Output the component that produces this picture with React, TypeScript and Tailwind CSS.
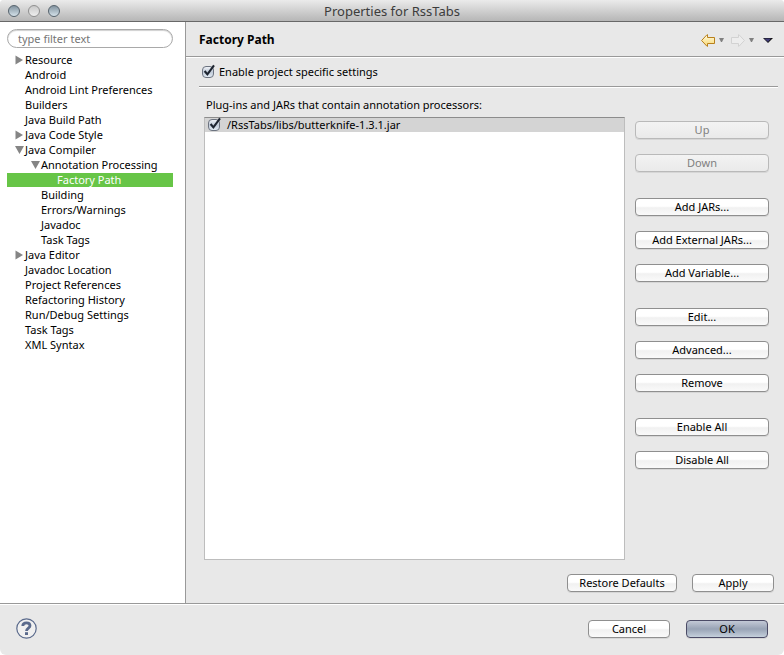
import { useId, useState } from "react";

type TreeItem = {
  label: string;
  depth: number;
  state?: "open" | "closed";
};

const treeItems: TreeItem[] = [
  { label: "Resource", depth: 0, state: "closed" },
  { label: "Android", depth: 0 },
  { label: "Android Lint Preferences", depth: 0 },
  { label: "Builders", depth: 0 },
  { label: "Java Build Path", depth: 0 },
  { label: "Java Code Style", depth: 0, state: "closed" },
  { label: "Java Compiler", depth: 0, state: "open" },
  { label: "Annotation Processing", depth: 1, state: "open" },
  { label: "Factory Path", depth: 2 },
  { label: "Building", depth: 1 },
  { label: "Errors/Warnings", depth: 1 },
  { label: "Javadoc", depth: 1 },
  { label: "Task Tags", depth: 1 },
  { label: "Java Editor", depth: 0, state: "closed" },
  { label: "Javadoc Location", depth: 0 },
  { label: "Project References", depth: 0 },
  { label: "Refactoring History", depth: 0 },
  { label: "Run/Debug Settings", depth: 0 },
  { label: "Task Tags", depth: 0 },
  { label: "XML Syntax", depth: 0 },
];

const indents = ["pl-2", "pl-6", "pl-10"];

const buttonGroups = [
  [
    { label: "Up", disabled: true },
    { label: "Down", disabled: true },
  ],
  [{ label: "Add JARs..." }, { label: "Add External JARs..." }, { label: "Add Variable..." }],
  [{ label: "Edit..." }, { label: "Advanced..." }, { label: "Remove" }],
  [{ label: "Enable All" }, { label: "Disable All" }],
] as { label: string; disabled?: boolean }[][];

function PushButton({
  label,
  disabled,
  primary,
  className,
}: {
  label: string;
  disabled?: boolean;
  primary?: boolean;
  className: string;
}) {
  const look = primary
    ? "border-[#4b4b66] bg-linear-to-b from-[#c3c9d6] via-[#98a3b5] to-[#c5d0dc]"
    : disabled
      ? "border-[#b9b9b9] bg-linear-to-b from-[#f3f3f3] to-[#eaeaea] text-[#808080]"
      : "border-[#8f8f8f] bg-linear-to-b from-white from-45% via-[#f1f1f1] via-55% to-[#fafafa]";
  return (
    <button
      type="button"
      disabled={disabled}
      className={`flex h-[18px] items-center justify-center rounded border leading-4 whitespace-nowrap shadow-[0_1px_0_#d6d6d6] ${look} ${className}`}
    >
      {label}
    </button>
  );
}

function CheckBox({ label, className }: { label: string; className: string }) {
  const id = useId();
  const [checked, setChecked] = useState(true);
  return (
    <div className={`flex items-center ${className}`}>
      <span className="relative size-3 shrink-0">
        <input
          id={id}
          type="checkbox"
          checked={checked}
          onChange={() => setChecked(!checked)}
          className="block size-3 appearance-none rounded-sm border border-[#6c7380] bg-linear-to-b from-[#eef1f6] via-[#c0cad8] to-[#e2ebf4]"
        />
        {checked && (
          <svg viewBox="0 0 14 14" className="pointer-events-none absolute -top-0.5 left-0 size-3.5" aria-hidden="true">
            <path d="M2.6 7 5.4 10.4 12 1.4" fill="none" stroke="#1d2430" strokeWidth="2.1" />
          </svg>
        )}
      </span>
      <label htmlFor={id}>{label}</label>
    </div>
  );
}

function Disclosure({ state }: { state?: "open" | "closed" }) {
  return (
    <svg viewBox="0 0 10 10" className="size-2.5 shrink-0" fill="#858585" aria-hidden="true">
      {state === "closed" && <path d="M0.5 0.5 8 5 0.5 9.5Z" />}
      {state === "open" && <path d="M0 1H9L4.5 9Z" />}
    </svg>
  );
}

function TitleBar() {
  return (
    <header className="grid h-[22px] grid-cols-[1fr_auto_1fr] items-center rounded-t border-b border-[#686868] bg-linear-to-b from-[#ebebeb] to-[#b6b6b6] px-2">
      <div className="flex gap-2">
        {["Close", "Minimize", "Zoom"].map((name) => (
          <button
            key={name}
            type="button"
            aria-label={name}
            className={`size-3 rounded-full border ${
              name === "Minimize"
                ? "border-[#8f8f8f] bg-linear-to-b from-[#c9c9c9] to-[#efefef]"
                : "border-[#56636d] bg-linear-to-b from-[#8394a0] to-[#d5e2ea]"
            }`}
          />
        ))}
      </div>
      <h1 className="text-[13px] leading-5 text-[#3c3c3c]">Properties for RssTabs</h1>
    </header>
  );
}

function SideBar() {
  const [selected, setSelected] = useState(8);
  return (
    <nav className="w-[186px] shrink-0 border-r border-[#999] bg-white px-[7px] pt-[7px] pr-3">
      <input
        type="text"
        aria-label="Filter"
        placeholder="type filter text"
        className="block h-[19px] w-full rounded-full border border-[#a9a9a9] bg-white px-2.5 text-[11px] shadow-[inset_0_1px_1px_#d0d0d0] placeholder:text-[#757575]"
      />
      <ul className="pt-[5px]">
        {treeItems.map((item, i) => (
          <li key={i}>
            <button
              type="button"
              onClick={() => setSelected(i)}
              className={`flex h-[15px] w-full items-center border-b border-white text-left leading-3.5 whitespace-nowrap ${indents[item.depth]} ${
                i === selected ? "bg-[#67c547] text-white" : ""
              }`}
            >
              <Disclosure state={item.state} />
              {item.label}
            </button>
          </li>
        ))}
      </ul>
    </nav>
  );
}

function HistoryArrow({ forward }: { forward?: boolean }) {
  return (
    <svg viewBox="0 0 14 13" className="h-[13px] w-3.5" aria-hidden="true">
      <defs>
        <linearGradient id="gold" x1="0" y1="0" x2="0" y2="1">
          <stop offset="0" stopColor="#fffbe0" />
          <stop offset="1" stopColor="#f8d873" />
        </linearGradient>
      </defs>
      <path
        d={
          forward
            ? "M0.5 3.5H7.5V0.7H8L13.4 6.5 8 12.3H7.5V9.5H0.5Z"
            : "M13.5 3.5H6.5V0.7H6L0.6 6.5 6 12.3H6.5V9.5H13.5Z"
        }
        fill={forward ? "#ededed" : "url(#gold)"}
        stroke={forward ? "#d2d2d2" : "#b8801c"}
      />
    </svg>
  );
}

function MenuTriangle() {
  return (
    <svg viewBox="0 0 5 4" className="h-1 w-[5px]" aria-hidden="true">
      <path d="M0 0H5L3 4H2Z" fill="#808080" />
    </svg>
  );
}

function PageHeader() {
  return (
    <div className="flex h-[35px] items-center justify-between border-b border-[#999] pt-0.5 pr-[11px] pl-[13px] shadow-[0_1px_0_white]">
      <h2 className="text-[12px] leading-4 font-bold">Factory Path</h2>
      <div className="flex items-center">
        <button type="button" aria-label="Back">
          <HistoryArrow />
        </button>
        <button type="button" aria-label="Back history" className="px-1">
          <MenuTriangle />
        </button>
        <button type="button" aria-label="Forward" disabled className="ml-[3px]">
          <HistoryArrow forward />
        </button>
        <button type="button" aria-label="Forward history" className="px-1">
          <MenuTriangle />
        </button>
        <button type="button" aria-label="View menu" className="ml-[5px]">
          <svg viewBox="0 0 10 5" className="h-[5px] w-2.5" aria-hidden="true">
            <path d="M0 0H10L5 5Z" fill="#111" />
            <path d="M1 0.5H8L5 4Z" fill="#403c78" />
          </svg>
        </button>
      </div>
    </div>
  );
}

export default function App() {
  return (
    <div className="min-h-screen bg-white">
      <div className="flex min-h-screen flex-col rounded-t rounded-b-md bg-[#e8e8e8] font-['Noto_Sans','Lucida_Grande',sans-serif] text-[11px] text-black">
        <TitleBar />
        <div className="flex grow">
          <SideBar />
          <main className="flex min-w-0 grow flex-col">
            <PageHeader />
            <div className="mr-1.5 ml-[13px] border-b border-[#999] pt-[7px] pb-1.5 shadow-[0_1px_0_white]">
              <CheckBox label="Enable project specific settings" className="h-4 gap-[5px] pl-[3px]" />
            </div>
            <div className="flex grow flex-col pt-2.5 pr-2.5 pl-[18px]">
              <p className="pl-0.5 leading-4">Plug-ins and JARs that contain annotation processors:</p>
              <div className="mt-1 flex grow gap-2.5 pr-[5px]">
                <ul className="min-w-0 grow border border-[#bdbdbd] border-t-[#8c8c8c] bg-white">
                  <li>
                    <CheckBox label="/RssTabs/libs/butterknife-1.3.1.jar" className="h-3.5 gap-[7px] bg-[#d4d4d4] pl-[3px]" />
                  </li>
                </ul>
                <div className="flex w-[134px] shrink-0 flex-col gap-[26px] pt-1">
                  {buttonGroups.map((group, i) => (
                    <div key={i} className="flex flex-col gap-[15px]">
                      {group.map((b) => (
                        <PushButton key={b.label} label={b.label} disabled={b.disabled} className="w-full" />
                      ))}
                    </div>
                  ))}
                </div>
              </div>
              <div className="flex justify-end gap-[15px] pt-3.5 pb-[11px]">
                <PushButton label="Restore Defaults" className="w-[110px]" />
                <PushButton label="Apply" className="w-[82px]" />
              </div>
            </div>
          </main>
        </div>
        <footer className="flex h-[52px] items-center justify-between border-t border-[#999] px-4 pb-0.5 shadow-[inset_0_1px_0_white]">
          <button type="button" aria-label="Help" className="rounded-full">
            <svg viewBox="0 0 21 21" className="size-[21px]" aria-hidden="true">
              <circle cx="10.5" cy="10.5" r="9.7" fill="#f0f0f0" stroke="#5a6a8c" strokeWidth="1.2" />
              <path d="M6.8 8C6.8 5.6 8.4 4.8 10.5 4.8S14 5.8 14 7.7C14 10 10.5 10.2 10.5 13" fill="none" stroke="#5a6a8c" strokeWidth="2.8" />
              <rect x="9" y="14.2" width="3" height="2.8" fill="#5a6a8c" />
            </svg>
          </button>
          <div className="flex gap-4">
            <PushButton label="Cancel" className="w-[82px]" />
            <PushButton label="OK" primary className="w-[82px]" />
          </div>
        </footer>
      </div>
    </div>
  );
}
